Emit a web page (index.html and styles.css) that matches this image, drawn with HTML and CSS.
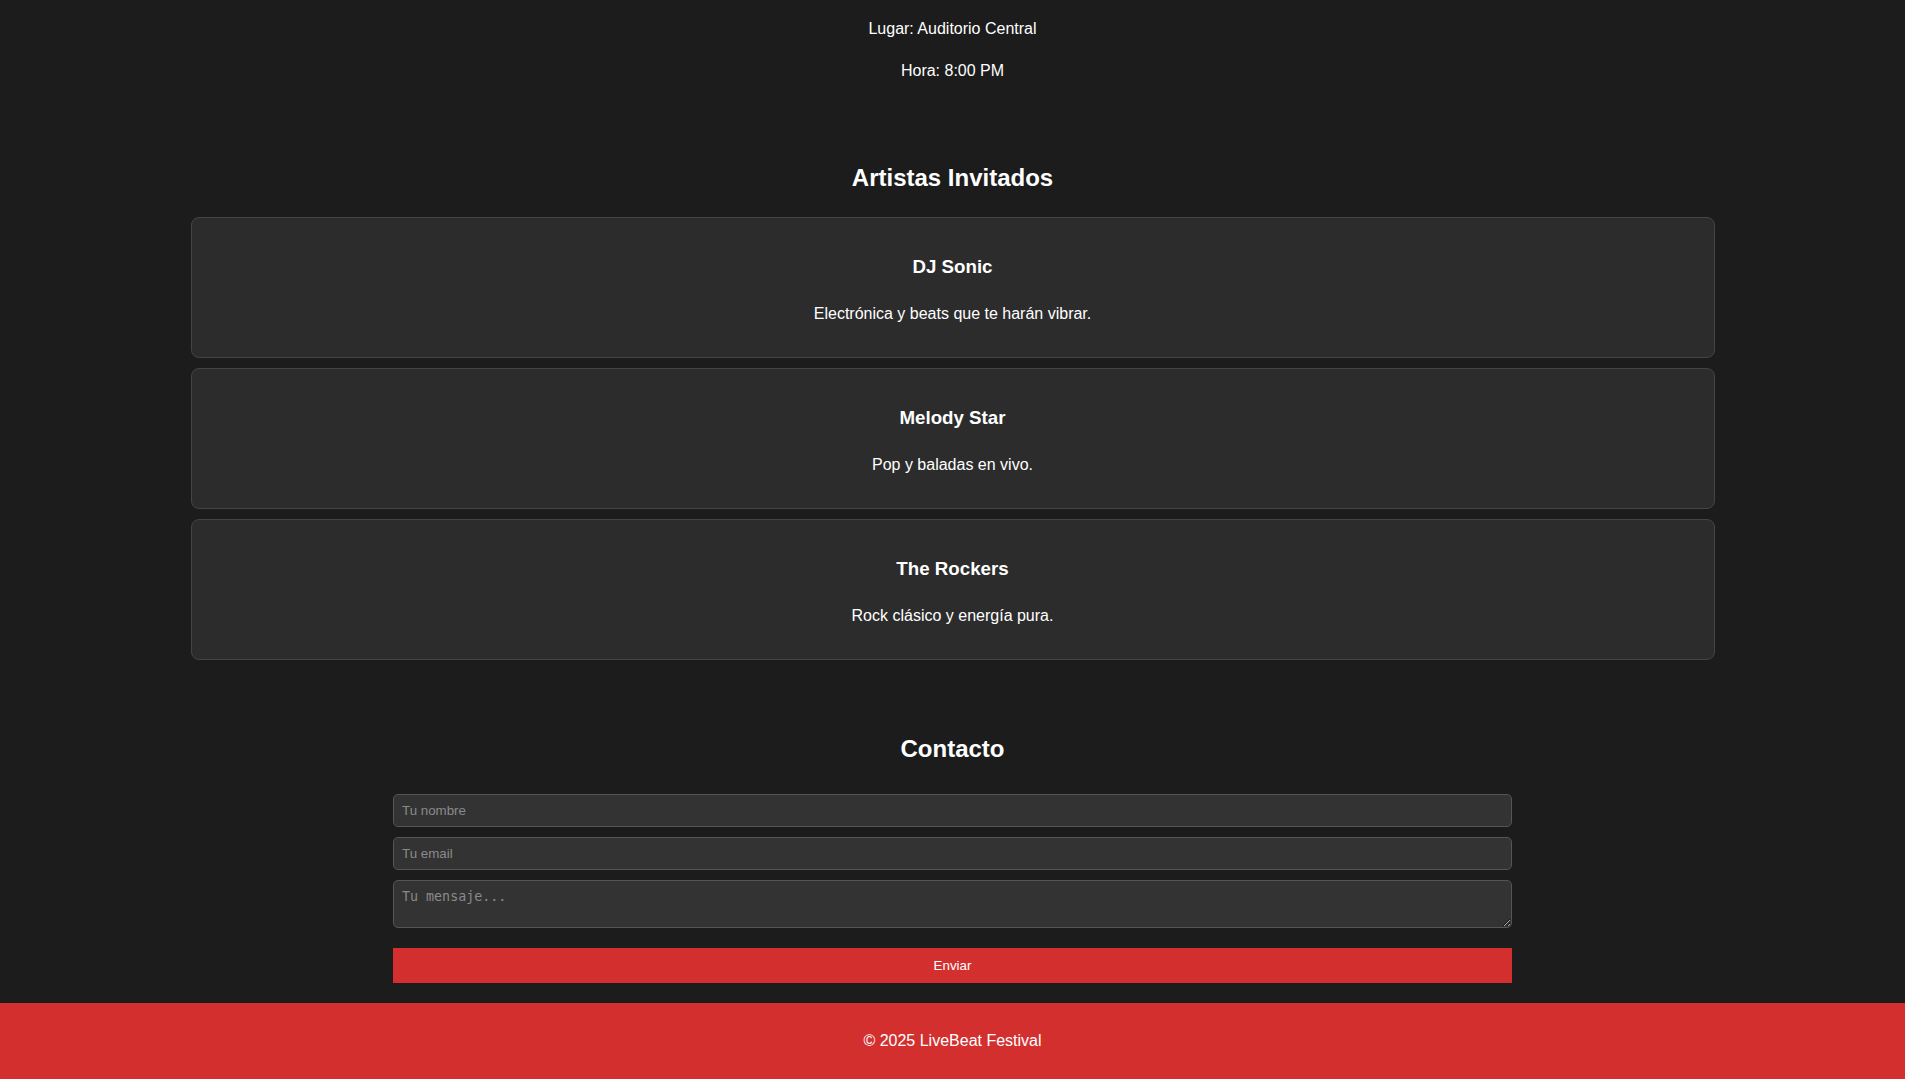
FILE: index.html
```html
<!DOCTYPE html>
<html lang="es">
<head>
<meta charset="utf-8">
<title>LiveBeat Festival</title>
<link rel="stylesheet" href="styles.css">
</head>
<body>
<section class="section event">
  <p>Lugar: Auditorio Central</p>
  <p>Hora: 8:00 PM</p>
</section>
<section class="section">
  <h2>Artistas Invitados</h2>
  <div class="artists">
    <div class="card">
      <h3>DJ Sonic</h3>
      <p>Electrónica y beats que te harán vibrar.</p>
    </div>
    <div class="card">
      <h3>Melody Star</h3>
      <p>Pop y baladas en vivo.</p>
    </div>
    <div class="card">
      <h3>The Rockers</h3>
      <p>Rock clásico y energía pura.</p>
    </div>
  </div>
</section>
<section class="section">
  <h2>Contacto</h2>
  <form class="contact-form">
    <input type="text" placeholder="Tu nombre">
    <input type="email" placeholder="Tu email">
    <textarea placeholder="Tu mensaje..."></textarea>
    <button type="button">Enviar</button>
  </form>
</section>
<footer class="footer">
  <p>© 2025 LiveBeat Festival</p>
</footer>
</body>
</html>
```
FILE: styles.css
```css
html, body {
  margin: 0;
  padding: 0;
}
body {
  background: #1c1c1c;
  color: #ffffff;
  font-family: "Liberation Sans", Arial, sans-serif;
  line-height: 1.6;
  text-align: center;
}
.section {
  padding: 20px;
}
.event {
  padding-top: 0;
}
.section h2 {
  font-size: 24px;
  margin: 19.92px 0;
}
.artists {
  max-width: 1524px;
  margin: 0 auto;
}
.card {
  background: #2c2c2c;
  border: 1px solid #444;
  border-radius: 8px;
  padding: 15px;
  margin: 10px 0;
}
.card h3 {
  font-size: 18.72px;
  margin: 18.72px 0;
}
.card p {
  margin: 16px 0;
}
.contact-form {
  width: 60%;
  margin: 0 auto;
  display: flex;
  flex-direction: column;
}
.contact-form input,
.contact-form textarea {
  box-sizing: border-box;
  width: 100%;
  margin: 5px 0;
  padding: 8px;
  background: #333;
  color: #fff;
  border: 1px solid #555;
  border-radius: 5px;
}
.contact-form input {
  height: 33px;
}
.contact-form textarea {
  height: 48px;
}
.contact-form ::placeholder {
  color: #8a8a8a;
}
.contact-form button {
  margin-top: 15px;
  height: 35px;
  padding: 10px;
  background: #d32f2f;
  color: #fff;
  border: none;
  font-family: "Liberation Sans", Arial, sans-serif;
  font-size: 13.33px;
}
.footer {
  background: #d32f2f;
  padding: 25px 0 26px;
}
.footer p {
  margin: 0;
  line-height: 25.6px;
}
```
